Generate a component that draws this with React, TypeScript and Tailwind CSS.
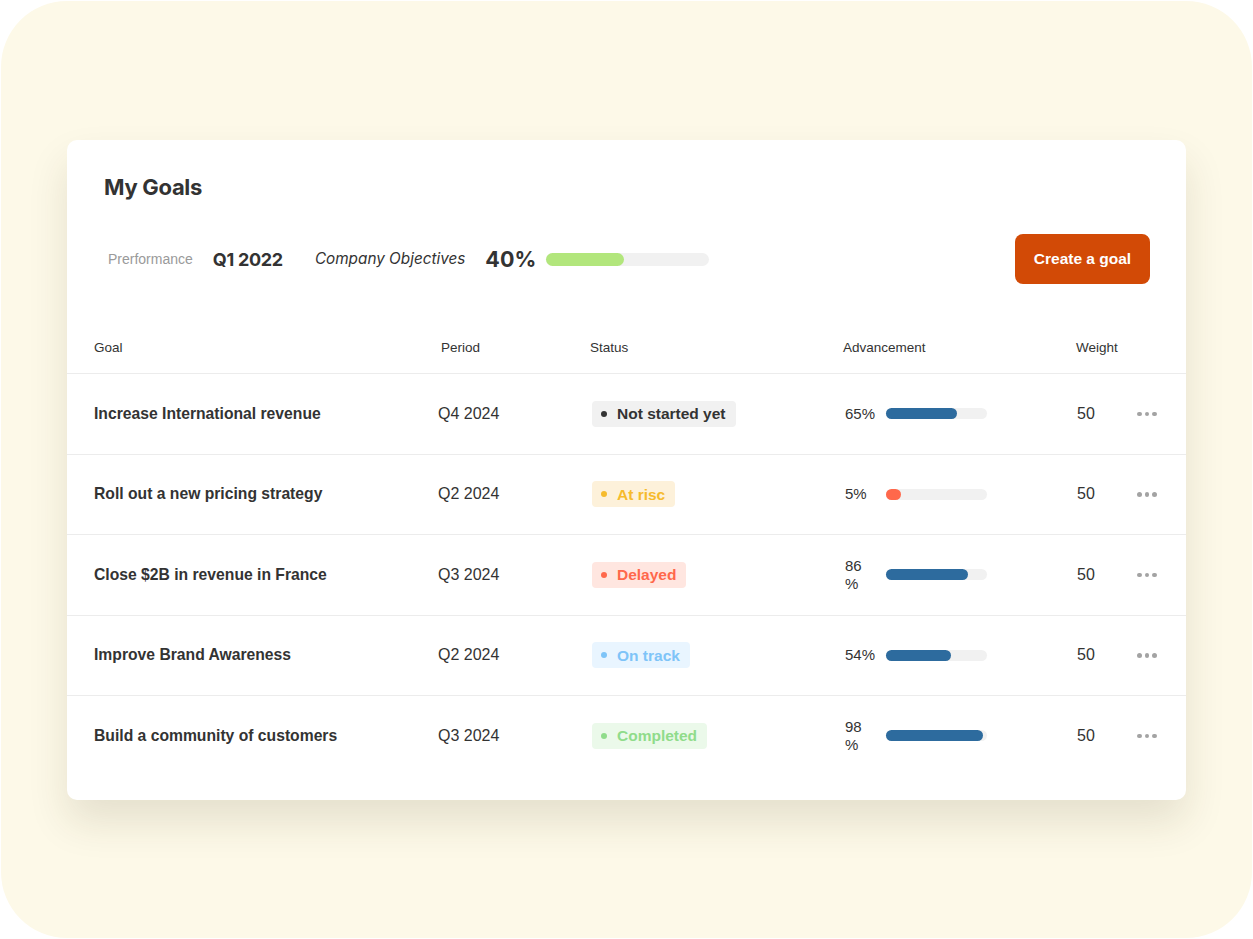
const goals = [
  { name: "Increase International revenue", period: "Q4 2024", status: "Not started yet", tone: "gray", pct: 65, fill: 71, color: "bg-[#2d6b9e]" },
  { name: "Roll out a new pricing strategy", period: "Q2 2024", status: "At risc", tone: "yellow", pct: 5, fill: 15, color: "bg-[#ff684b]" },
  { name: "Close $2B in revenue in France", period: "Q3 2024", status: "Delayed", tone: "red", pct: 86, fill: 82, color: "bg-[#2d6b9e]", wrap: true },
  { name: "Improve Brand Awareness", period: "Q2 2024", status: "On track", tone: "blue", pct: 54, fill: 65, color: "bg-[#2d6b9e]" },
  { name: "Build a community of customers", period: "Q3 2024", status: "Completed", tone: "green", pct: 98, fill: 97, color: "bg-[#2d6b9e]", wrap: true },
];

const tones: Record<string, { box: string; dot: string }> = {
  gray: { box: "bg-[#f1f1f1] text-[#333333]", dot: "bg-[#333333]" },
  yellow: { box: "bg-[#fdf1da] text-[#f6bb2c]", dot: "bg-[#f6bb2c]" },
  red: { box: "bg-[#ffe6e0] text-[#ff684b]", dot: "bg-[#ff684b]" },
  blue: { box: "bg-[#e9f5ff] text-[#7ec4f8]", dot: "bg-[#7ec4f8]" },
  green: { box: "bg-[#ebf9ea] text-[#90dc8b]", dot: "bg-[#90dc8b]" },
};

const cols = "grid grid-cols-[344px_149px_253px_233px_61px_1fr] items-center px-[27px]";
const inter = { fontFamily: 'Inter, "Liberation Sans", sans-serif' };

const StatusBadge = ({ label, tone }: { label: string; tone: string }) => {
  const t = tones[tone];
  return (
    <span className={`ml-[5px] inline-flex h-[26px] items-center gap-[10px] rounded-[4px] pl-[9px] pr-[10px] text-[15.5px] font-bold ${t.box}`}>
      <span className={`h-[6px] w-[6px] rounded-full ${t.dot}`} />
      {label}
    </span>
  );
};

export default function App() {
  return (
    <div className="h-[939px] w-[1253px] bg-white p-[1px]" style={{ fontFamily: '"Liberation Sans", Arial, sans-serif' }}>
      <div className="h-full w-full rounded-[66px] bg-[#fdf9e8] pl-[66px] pt-[139px]">
        <div className="h-[660px] w-[1119px] rounded-[10px] bg-white pt-[33px] text-[#333333] shadow-[0_22px_40px_rgba(60,50,20,0.12)]">
          <h1 className="pl-[37px] text-[22px] font-bold leading-[28px] tracking-[-0.3px]" style={inter}>
            My Goals
          </h1>
          <div className="mt-[33px] flex items-center pl-[41px] pr-[36px]">
            <span className="text-[14px] font-light text-[#9a9a9a]">Prerformance</span>
            <span className="ml-[20px] text-[18px] font-bold tracking-[-0.3px]" style={inter}>Q1 2022</span>
            <span className="ml-[32px] text-[15.3px] italic" style={inter}>Company Objectives</span>
            <span className="ml-[20px] text-[21.5px] font-bold" style={inter}>40%</span>
            <div className="ml-[10px] h-[13px] w-[163px] rounded-full bg-[#f1f1f1]">
              <div className="h-full w-[78px] rounded-full bg-[#b2e67c]" />
            </div>
            <button className="ml-auto h-[50px] w-[135px] rounded-[8px] bg-[#d24a06] text-[15.5px] font-bold text-white">
              Create a goal
            </button>
          </div>
          <div className={`${cols} mt-[37px] h-[52px] pt-[2px] text-[13.5px]`}>
            <span>Goal</span>
            <span className="pl-[3px]">Period</span>
            <span className="pl-[3px]">Status</span>
            <span className="pl-[3px]">Advancement</span>
            <span className="pl-[3px]">Weight</span>
            <span />
          </div>
          {goals.map((g) => (
            <div key={g.name} className={`${cols} h-[80.5px] border-t border-[#ececec] text-[15px]`}>
              <span className="text-[15.7px] font-bold">{g.name}</span>
              <span className="text-[16px]">{g.period}</span>
              <span>
                <StatusBadge label={g.status} tone={g.tone} />
              </span>
              <div className="flex items-center pl-[5px]">
                <span className="w-[41px] shrink-0 leading-[18px]">
                  {g.wrap ? (
                    <>
                      {g.pct}
                      <br />%
                    </>
                  ) : (
                    `${g.pct}%`
                  )}
                </span>
                <div className="h-[11px] w-[101px] rounded-full bg-[#f1f1f1]">
                  <div className={`h-full rounded-full ${g.color}`} style={{ width: `${g.fill}px` }} />
                </div>
              </div>
              <span className="pl-[4px] text-[16px]">50</span>
              <div className="flex gap-[3px] pl-[3px]">
                <span className="h-[4.5px] w-[4.5px] rounded-full bg-[#a3a3a3]" />
                <span className="h-[4.5px] w-[4.5px] rounded-full bg-[#a3a3a3]" />
                <span className="h-[4.5px] w-[4.5px] rounded-full bg-[#a3a3a3]" />
              </div>
            </div>
          ))}
        </div>
      </div>
    </div>
  );
}
